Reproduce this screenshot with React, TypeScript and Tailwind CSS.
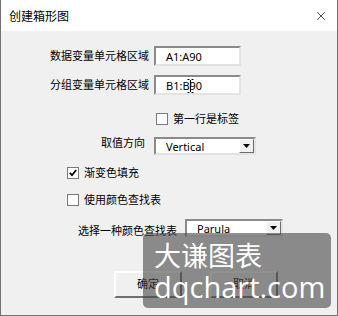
import { X } from 'lucide-react';

const sunken =
  'border-2 border-t-[#8a8a8a] border-l-[#8a8a8a] border-r-[#e3e3e3] border-b-[#e3e3e3] bg-white';
const raised =
  'border-2 border-t-[#ffffff] border-l-[#ffffff] border-r-[#6e6e6e] border-b-[#6e6e6e] bg-[#f0f0f0]';

const TextField = ({ value, cursor }: { value: string; cursor?: boolean }) => (
  <div className={`relative w-[87px] h-[20px] ${sunken} flex items-center pl-[10px]`}>
    <span className="leading-none">{value}</span>
    {cursor && (
      <svg className="absolute left-[31px] top-[2px]" width="7" height="14" viewBox="0 0 7 14">
        <path d="M0.5 0.5h2M4.5 0.5h2M3.5 1v12M0.5 13.5h2M4.5 13.5h2" stroke="#000" strokeWidth="1" fill="none" />
      </svg>
    )}
  </div>
);

const Select = ({ value, width }: { value: string; width: string }) => (
  <div className={`${width} h-[18px] ${sunken} flex items-center`}>
    <span className="flex-1 pl-[10px] leading-none">{value}</span>
    <div className={`w-[15px] h-full ${raised} border-[1px] flex items-center justify-center`}>
      <svg width="7" height="4" viewBox="0 0 7 4">
        <path d="M0 0h7L3.5 4z" fill="#000" />
      </svg>
    </div>
  </div>
);

const Checkbox = ({ label, checked }: { label: string; checked?: boolean }) => (
  <div className="flex items-center h-[13px]">
    <div className="w-[12px] h-[12px] border border-[#7a7a7a] bg-white flex items-center justify-center">
      {checked && (
        <svg width="8" height="8" viewBox="0 0 8 8">
          <path d="M0.8 3.8l2.2 2.4L7.2 1" stroke="#000" strokeWidth="1.8" fill="none" />
        </svg>
      )}
    </div>
    <span className="ml-[5px] leading-none">{label}</span>
  </div>
);

const Button = ({ label }: { label: string }) => (
  <div className={`w-[68px] h-[27px] ${raised} flex items-center justify-center`}>{label}</div>
);

export default function App() {
  return (
    <div
      className="relative w-[338px] h-[316px] bg-[#f0f0f0] border-l border-r border-b border-[#707070] text-[11px] text-black overflow-hidden"
      style={{ fontFamily: '"Noto Sans", "Noto Sans CJK SC", sans-serif' }}
    >
      <div className="h-[31px] bg-white flex items-center justify-between pl-[8px] pr-[9px]">
        <span className="text-[12px]" style={{ fontFamily: '"Noto Sans CJK SC", sans-serif' }}>
          创建箱形图
        </span>
        <X className="w-[14px] h-[14px]" strokeWidth={1.2} />
      </div>

      <div className="flex flex-col pt-[15px]">
        <div className="flex items-center h-[20px]">
          <span className="w-[148px] text-right">数据变量单元格区域</span>
          <div className="ml-[5px]">
            <TextField value="A1:A90" />
          </div>
        </div>
        <div className="flex items-center h-[20px] mt-[9px]">
          <span className="w-[148px] text-right">分组变量单元格区域</span>
          <div className="ml-[5px]">
            <TextField value="B1:B90" cursor />
          </div>
        </div>
        <div className="pl-[155px] mt-[17px]">
          <Checkbox label="第一行是标签" />
        </div>
        <div className="flex items-center h-[18px] mt-[12px]">
          <span className="w-[144px] text-right -mt-[5px]">取值方向</span>
          <div className="ml-[9px]">
            <Select value="Vertical" width="w-[102px]" />
          </div>
        </div>
        <div className="pl-[66px] mt-[11px]">
          <Checkbox label="渐变色填充" checked />
        </div>
        <div className="pl-[66px] mt-[14px]">
          <Checkbox label="使用颜色查找表" />
        </div>
        <div className="flex items-center h-[18px] mt-[13px] pl-[77px]">
          <span className="mt-[6px]">选择一种颜色查找表</span>
          <div className="ml-[8px]">
            <Select value="Parula" width="w-[98px]" />
          </div>
        </div>
        <div className="flex gap-[28px] pl-[113px] mt-[34px]">
          <Button label="确定" />
          <Button label="取消" />
        </div>
      </div>

      <div className="absolute left-[142px] top-[233px] w-[188px] h-[75px] rounded-[5px] bg-[rgba(70,70,70,0.6)] text-white pl-[11px]">
        <div className="text-[27px] leading-none mt-[8px]" style={{ fontFamily: '"Noto Sans CJK SC", sans-serif' }}>
          大谦图表
        </div>
        <div className="text-[29px] leading-none mt-[4px]" style={{ fontFamily: '"Open Sans", sans-serif' }}>
          dqchart.com
        </div>
      </div>
    </div>
  );
}
